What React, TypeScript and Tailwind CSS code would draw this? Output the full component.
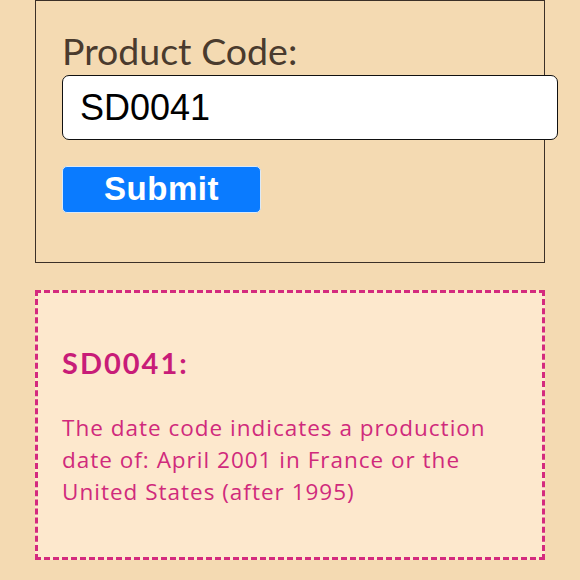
import React, { useState } from 'react';

export default function App() {
  const [code, setCode] = useState('SD0041');

  return (
    <div className="min-h-[580px] overflow-hidden bg-[#f4dab2] px-[35px]">
      {/* Lookup form */}
      <div className="flex h-[263px] flex-col items-start border border-[#3b2f27] pl-[26px] pt-[29px]">
        <label htmlFor="code" className="font-['Lato',sans-serif] text-[37.5px] leading-[42px] text-[#4a3b2e]">
          Product Code:
        </label>
        <input
          id="code"
          value={code}
          onChange={(e) => setCode(e.target.value)}
          className="mt-[3px] h-[65px] w-[496px] rounded-[7px] border-[1.5px] border-[#111] bg-white pl-[17px] font-['Liberation_Sans',Arial,sans-serif] text-[36px] text-black outline-none"
        />
        <button className="mt-[26px] h-[47px] w-[199px] rounded-[5px] border border-[#dbe9f7] bg-[#0a7bff] pb-[3px] font-['Liberation_Sans',Arial,sans-serif] text-[33px] font-bold leading-none tracking-[0.5px] text-white">
          Submit
        </button>
      </div>

      {/* Result */}
      <div className="mt-[27px] h-[270px] border-[3px] border-dashed border-[#d42a7e] bg-[#fde8cd] pl-[24px] pt-[53px] text-[#d02a7c]">
        <h2 className="font-['Lato',sans-serif] text-[29px] font-bold leading-[34px] tracking-[2px] text-[#c81c78]">
          SD0041:
        </h2>
        <p className="mt-[32px] w-[440px] font-['Open_Sans',sans-serif] text-[22.5px] leading-[32px] tracking-[1px]">
          The date code indicates a production date of: April 2001 in France or the United States (after 1995)
        </p>
      </div>
    </div>
  );
}
